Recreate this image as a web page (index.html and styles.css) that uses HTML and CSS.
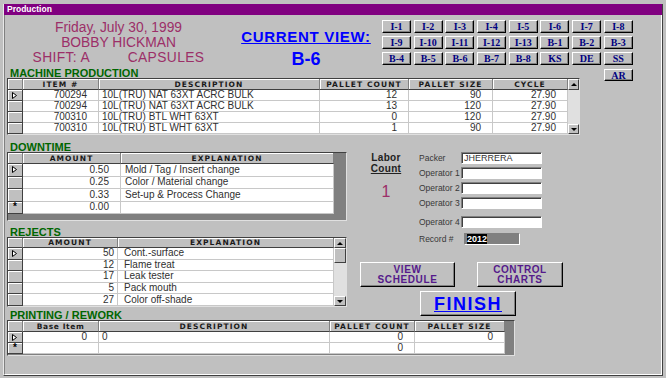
FILE: index.html
```html
<!DOCTYPE html>
<html lang="en">
<head>
  <meta charset="UTF-8">
  <title>Production</title>
  <link rel="stylesheet" href="styles.css">
</head>
<body>

<div class="window">
  <div class="titlebar">Production</div>

  <div class="form">
    <div class="top">
      <div class="who">
        <div>Friday, July 30, 1999</div>
        <div>BOBBY HICKMAN</div>
        <div class="shift">SHIFT: A <span class="line">CAPSULES</span></div>
      </div>
      <div class="view">
        <div class="view-label">CURRENT VIEW:</div>
        <div class="view-code">B-6</div>
      </div>
      <div class="views">
        <button class="vbtn">I-1</button>
        <button class="vbtn">I-2</button>
        <button class="vbtn">I-3</button>
        <button class="vbtn">I-4</button>
        <button class="vbtn">I-5</button>
        <button class="vbtn">I-6</button>
        <button class="vbtn">I-7</button>
        <button class="vbtn">I-8</button>
        <button class="vbtn">I-9</button>
        <button class="vbtn">I-10</button>
        <button class="vbtn">I-11</button>
        <button class="vbtn">I-12</button>
        <button class="vbtn">I-13</button>
        <button class="vbtn">B-1</button>
        <button class="vbtn">B-2</button>
        <button class="vbtn">B-3</button>
        <button class="vbtn">B-4</button>
        <button class="vbtn">B-5</button>
        <button class="vbtn">B-6</button>
        <button class="vbtn">B-7</button>
        <button class="vbtn">B-8</button>
        <button class="vbtn">KS</button>
        <button class="vbtn">DE</button>
        <button class="vbtn">SS</button>
      </div>
    </div>

    <div class="section-row">
      <div class="section">MACHINE PRODUCTION</div>
      <button class="vbtn ar">AR</button>
    </div>

    <div class="sheet machine">
      <table class="grid">
        <colgroup>
          <col class="col-sel"><col class="col-item"><col class="col-desc">
          <col class="col-count"><col class="col-size"><col class="col-cycle">
        </colgroup>
        <tr><th></th><th>ITEM #</th><th>DESCRIPTION</th><th>PALLET COUNT</th><th>PALLET SIZE</th><th>CYCLE</th></tr>
        <tr><td class="sel"><svg width="6" height="7" viewBox="0 0 6 7"><path d="M.5 .5L4.5 3.5L.5 6.5Z" fill="#fff" stroke="#000"/></svg></td><td class="num">700294</td><td>10L(TRU) NAT 63XT ACRC BULK</td><td class="num">12</td><td class="num">90</td><td class="num">27.90</td></tr>
        <tr><td class="sel"></td><td class="num">700294</td><td>10L(TRU) NAT 63XT ACRC BULK</td><td class="num">13</td><td class="num">120</td><td class="num">27.90</td></tr>
        <tr><td class="sel"></td><td class="num">700310</td><td>10L(TRU) BTL WHT 63XT</td><td class="num">0</td><td class="num">120</td><td class="num">27.90</td></tr>
        <tr><td class="sel"></td><td class="num">700310</td><td>10L(TRU) BTL WHT 63XT</td><td class="num">1</td><td class="num">90</td><td class="num">27.90</td></tr>
      </table>
      <div class="vscroll">
        <span class="arrow up"></span>
        <span class="arrow down"></span>
      </div>
    </div>

    <div class="middle">
      <div class="left-col">
        <div class="section downtime-label">DOWNTIME</div>
        <div class="sheet downtime">
          <table class="grid">
            <colgroup><col class="col-sel"><col class="col-amount"><col class="col-expl"></colgroup>
            <tr><th></th><th>AMOUNT</th><th>EXPLANATION</th></tr>
            <tr><td class="sel"><svg width="6" height="7" viewBox="0 0 6 7"><path d="M.5 .5L4.5 3.5L.5 6.5Z" fill="#fff" stroke="#000"/></svg></td><td class="num">0.50</td><td class="text">Mold / Tag / Insert change</td></tr>
            <tr><td class="sel"></td><td class="num">0.25</td><td class="text">Color / Material change</td></tr>
            <tr><td class="sel"></td><td class="num">0.33</td><td class="text">Set-up &amp; Process Change</td></tr>
            <tr><td class="sel new">*</td><td class="num">0.00</td><td class="text"></td></tr>
          </table>
        </div>

        <div class="section rejects-label">REJECTS</div>
        <div class="sheet rejects">
          <table class="grid">
            <colgroup><col class="col-sel"><col class="col-amount"><col class="col-expl"></colgroup>
            <tr><th></th><th>AMOUNT</th><th>EXPLANATION</th></tr>
            <tr><td class="sel"><svg width="6" height="7" viewBox="0 0 6 7"><path d="M.5 .5L4.5 3.5L.5 6.5Z" fill="#fff" stroke="#000"/></svg></td><td class="num">50</td><td class="text">Cont.-surface</td></tr>
            <tr><td class="sel"></td><td class="num">12</td><td class="text">Flame treat</td></tr>
            <tr><td class="sel"></td><td class="num">17</td><td class="text">Leak tester</td></tr>
            <tr><td class="sel"></td><td class="num">5</td><td class="text">Pack mouth</td></tr>
            <tr><td class="sel"></td><td class="num">27</td><td class="text">Color off-shade</td></tr>
          </table>
          <div class="vscroll">
            <span class="arrow up"></span>
            <span class="thumb"></span>
            <span class="arrow down"></span>
          </div>
        </div>
      </div>

      <div class="right-col">
        <div class="crew">
          <div class="labor">
            Labor<br><u>Count</u>
            <div class="count">1</div>
          </div>
          <div class="fields">
            <div class="field"><label>Packer</label><span class="box">JHERRERA</span></div>
            <div class="field"><label>Operator 1</label><span class="box"></span></div>
            <div class="field"><label>Operator 2</label><span class="box"></span></div>
            <div class="field"><label>Operator 3</label><span class="box"></span></div>
            <div class="field op4"><label>Operator 4</label><span class="box"></span></div>
            <div class="field record"><label>Record #</label><span class="box dark"><span class="selected">2012</span></span></div>
          </div>
        </div>

        <div class="actions">
          <button class="cmd schedule">VIEW<br>SCHEDULE</button>
          <button class="cmd charts">CONTROL<br>CHARTS</button>
        </div>
        <button class="cmd finish">FINISH</button>
      </div>
    </div>

    <div class="section printing-label">PRINTING / REWORK</div>
    <div class="sheet printing">
      <table class="grid">
        <colgroup>
          <col class="col-sel"><col class="col-item"><col class="col-desc">
          <col class="col-count"><col class="col-size">
        </colgroup>
        <tr><th></th><th class="mixed">Base Item</th><th>DESCRIPTION</th><th>PALLET COUNT</th><th>PALLET SIZE</th></tr>
        <tr><td class="sel"><svg width="6" height="7" viewBox="0 0 6 7"><path d="M.5 .5L4.5 3.5L.5 6.5Z" fill="#fff" stroke="#000"/></svg></td><td class="num">0</td><td>0</td><td class="num">0</td><td class="num">0</td></tr>
        <tr><td class="sel new">*</td><td class="num"></td><td></td><td class="num">0</td><td class="num"></td></tr>
      </table>
    </div>
  </div>
</div>

</body>
</html>
```

FILE: styles.css
```css
body {
  margin: 0;
  background: #c0c0c0;
  font-family: "Liberation Sans", Arial, sans-serif;
}
.window {
  width: 660px;
  margin: 4px 0 0 3px;
  box-sizing: border-box;
  border-left: 1px solid #e8e8e8;
  border-right: 1px solid #404040;
  border-bottom: 1px solid #404040;
}
.titlebar {
  height: 11px;
  line-height: 11px;
  padding-left: 3px;
  background: #800080;
  color: #fff;
  font-size: 8.5px;
  font-weight: bold;
}
.form {
  height: 360px;
  box-sizing: border-box;
  padding: 5px 0 0 2px;
  border-left: 1px solid #808080;
  border-right: 1px solid #fff;
  border-bottom: 1px solid #fff;
}

/* header */
.top {
  display: flex;
  height: 48px;
}
.who {
  width: 223px;
  text-align: center;
  color: #9c2f68;
  font-size: 13.8px;
  line-height: 15px;
}
.shift {
  letter-spacing: .4px;
}
.shift .line {
  margin-left: 34px;
}
.view {
  width: 152px;
  text-align: center;
  color: #0000ff;
  font-weight: bold;
}
.view-label {
  margin-top: 8px;
  font-size: 15px;
  line-height: 18px;
  letter-spacing: .7px;
  text-decoration: underline;
}
.view-code {
  margin-top: 3px;
  font-size: 18px;
  line-height: 20px;
}
.views {
  display: grid;
  grid-template-columns: repeat(8, 29px);
  grid-auto-rows: 13px;
  gap: 3px 2.7px;
}
.vbtn {
  padding: 0;
  background: #c0c0c0;
  border: 1px solid;
  border-color: #fff #000 #000 #fff;
  box-shadow: inset -1px -1px #808080;
  color: #000080;
  font: bold 10px "Liberation Serif", serif;
  line-height: 11px;
}

.section-row {
  display: flex;
  height: 10px;
}
.section-row .section {
  width: 594px;
}
.ar {
  width: 29px;
  height: 12px;
  margin-top: 1px;
  flex: none;
}
.section {
  height: 10px;
  line-height: 10px;
  padding-left: 3px;
  color: #006600;
  font-size: 11px;
  font-weight: bold;
}
.downtime-label {
  margin-top: 7px;
}
.rejects-label {
  margin-top: 6px;
}
.printing-label {
  margin-top: 3px;
}

/* datasheets */
.sheet {
  display: flex;
  box-sizing: border-box;
  background: #808080;
  border: 1px solid;
  border-color: #404040 #e0e0e0 #e0e0e0 #404040;
}
.sheet.machine { width: 573px; height: 57px; }
.sheet.downtime { width: 340px; height: 69px; }
.sheet.rejects { width: 340px; height: 70px; }
.sheet.printing { width: 508px; height: 36px; }

.grid {
  align-self: flex-start;
  table-layout: fixed;
  border-collapse: separate;
  border-spacing: 0;
  font-size: 10px;
  color: #303030;
}
.machine .grid { width: 560px; }
.downtime .grid, .rejects .grid { width: 326px; }
.printing .grid { width: 497px; }

.col-sel { width: 15px; }
.col-item { width: 76px; }
.machine .col-desc { width: 221px; }
.machine .col-count { width: 89px; }
.machine .col-size { width: 84px; }
.col-cycle { width: 75px; }
.downtime .col-amount { width: 98px; }
.downtime .col-expl { width: 213px; }
.rejects .col-amount { width: 95px; }
.rejects .col-expl { width: 216px; }
.printing .col-desc { width: 231px; }
.printing .col-count { width: 85px; }
.printing .col-size { width: 90px; }

.grid th, .grid td {
  box-sizing: border-box;
  padding: 0 3px;
  white-space: nowrap;
  overflow: hidden;
  line-height: 10px;
}
.grid th {
  background: #c0c0c0;
  border-right: 1px solid #808080;
  border-bottom: 1px solid #404040;
  box-shadow: inset 1px 1px #fff;
  color: #1a1a1a;
  font: bold 7.5px "DejaVu Sans", sans-serif;
  letter-spacing: 1.1px;
  text-align: center;
}
.grid th.mixed {
  letter-spacing: .6px;
}
.grid td {
  background: #fff;
  border-right: 1px solid #c8c8c8;
  border-bottom: 1px solid #c8c8c8;
}
.grid td.num {
  text-align: right;
  padding-right: 11px;
}
.grid td.text {
  padding-left: 4px;
}
.rejects .grid td.num {
  padding-right: 3px;
}
.rejects .grid td.text {
  padding-left: 6px;
}
.grid td.sel {
  padding: 0;
  background: #c0c0c0;
  border-right: 1px solid #404040;
  border-bottom: 1px solid #404040;
  box-shadow: inset 1px 1px #fff;
  text-align: center;
}
.grid td.sel svg {
  display: block;
  margin: 0 auto;
}
.grid td.new {
  font-size: 10px;
  font-weight: bold;
  color: #000;
}

.machine th, .machine td { height: 11px; }
.downtime th { height: 11px; }
.downtime td { height: 12.5px; }
.rejects th { height: 10px; }
.rejects td { height: 11.6px; }
.printing th, .printing td { height: 11px; }

.vscroll {
  display: flex;
  flex-direction: column;
  width: 11px;
  background: #e0e0e0;
}
.rejects .vscroll {
  width: 12px;
}
.arrow, .thumb {
  flex: none;
  box-sizing: border-box;
  height: 10px;
  background: #c0c0c0;
  border: 1px solid;
  border-color: #fff #404040 #404040 #fff;
}
.machine .arrow.up {
  height: 11px;
}
.arrow {
  display: flex;
  align-items: center;
  justify-content: center;
}
.arrow::after {
  content: "";
  border-left: 3px solid transparent;
  border-right: 3px solid transparent;
}
.arrow.up::after {
  border-bottom: 3px solid #000;
}
.arrow.down::after {
  border-top: 3px solid #000;
}
.arrow.down {
  margin-top: auto;
}
.thumb {
  height: 15px;
}

/* right side */
.middle {
  display: flex;
  height: 172px;
}
.left-col {
  width: 340px;
}
.right-col {
  flex: 1;
}
.crew {
  display: flex;
  margin-top: 17px;
}
.labor {
  width: 40px;
  margin-left: 19px;
  text-align: center;
  color: #222;
  font-size: 10px;
  font-weight: bold;
  line-height: 11px;
  letter-spacing: .3px;
}
.count {
  margin-top: 10px;
  color: #9c2f68;
  font-size: 16px;
  font-weight: normal;
  line-height: 16px;
}
.fields {
  display: flex;
  flex-direction: column;
  gap: 3px;
  margin-left: 13px;
}
.field {
  display: flex;
  align-items: center;
  height: 12px;
  color: #383838;
  font-size: 8.5px;
}
.field label {
  width: 42px;
  white-space: nowrap;
}
.field.op4 {
  margin-top: 4px;
}
.field.record {
  margin-top: 2px;
}
.box {
  box-sizing: border-box;
  width: 81px;
  height: 12px;
  padding-left: 2px;
  background: #fff;
  border: 1px solid;
  border-color: #808080 #fff #fff #808080;
  box-shadow: inset 1px 1px #404040;
  font-size: 9px;
  line-height: 10px;
  color: #333;
}
.box.dark {
  width: 56px;
  margin-left: 3px;
  background: #808080;
  box-shadow: none;
}
.selected {
  background: #000;
  color: #fff;
  font-weight: bold;
}

.cmd {
  padding: 0;
  height: 25px;
  background: #c0c0c0;
  border: 1px solid;
  border-color: #fff #000 #000 #fff;
  box-shadow: inset -1px -1px #808080;
  color: #551a8b;
  font: bold 10px "Liberation Sans", Arial, sans-serif;
  line-height: 10px;
  letter-spacing: .6px;
}
.actions {
  display: flex;
  gap: 22px;
  margin: 17px 0 0 13px;
}
.schedule {
  width: 95px;
}
.charts {
  width: 86px;
}
.finish {
  display: block;
  width: 96px;
  margin: 4px 0 0 73px;
  color: #0000ff;
  font-size: 18px;
  line-height: 20px;
  letter-spacing: 1.5px;
  text-decoration: underline;
}
```
